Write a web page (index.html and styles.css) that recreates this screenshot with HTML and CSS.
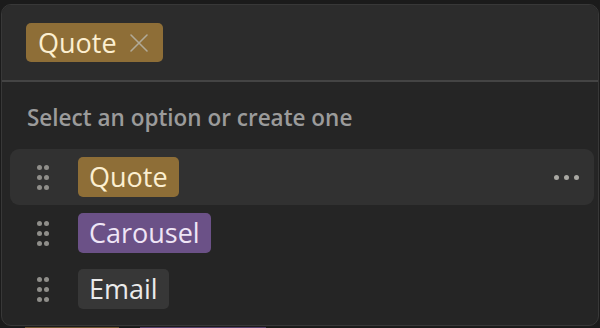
FILE: index.html
```html
<!DOCTYPE html>
<html>
<head>
<meta charset="utf-8">
<link rel="stylesheet" href="styles.css">
</head>
<body>
<div class="panel">
  <div class="header">
    <span class="tag tag-gold">Quote
      <svg class="remove" viewBox="0 0 20 20" width="20" height="20"><path d="M2 2 L18 18 M18 2 L2 18" stroke="currentColor" stroke-width="1.6" fill="none" stroke-linecap="round"/></svg>
    </span>
  </div>
  <div class="body">
    <div class="label">Select an option or create one</div>
    <div class="row hover">
      <span class="handle"><i></i><i></i><i></i><i></i><i></i><i></i></span>
      <span class="tag tag-gold">Quote</span>
      <span class="more"><i></i><i></i><i></i></span>
    </div>
    <div class="row">
      <span class="handle"><i></i><i></i><i></i><i></i><i></i><i></i></span>
      <span class="tag tag-purple">Carousel</span>
    </div>
    <div class="row">
      <span class="handle"><i></i><i></i><i></i><i></i><i></i><i></i></span>
      <span class="tag tag-gray">Email</span>
    </div>
  </div>
</div>
<div class="under">
  <span class="peek peek-gold"></span>
  <span class="peek peek-purple"></span>
</div>
</body>
</html>
```
FILE: styles.css
```css
html, body {
  margin: 0;
  padding: 0;
  background: #1b1b1b;
  font-family: "Open Sans", "Noto Sans", sans-serif;
  overflow: hidden;
}
.panel {
  margin: 4px 0 0 1px;
  width: 598px;
  height: 322px;
  box-sizing: border-box;
  border: 1px solid #383838;
  border-radius: 10px;
  overflow: hidden;
  background: #252525;
  display: flex;
  flex-direction: column;
}
.header {
  height: 77px;
  box-sizing: border-box;
  background: #2c2c2c;
  border-bottom: 2px solid #444444;
  padding: 0 0 0 24px;
  display: flex;
  align-items: center;
}
.tag {
  display: inline-flex;
  align-items: center;
  height: 40px;
  box-sizing: border-box;
  padding: 0 11px;
  border-radius: 5px;
  font-size: 27px;
  line-height: 40px;
  white-space: nowrap;
}
.header .tag {
  height: 39px;
  padding: 0 14px 0 12px;
}
.tag-gold { background: #8e6e37; color: #fcefd0; }
.tag-purple { background: #6b5187; color: #efe5f6; }
.tag-gray { background: #373737; color: #ebebeb; }
.remove {
  margin-left: 12px;
  color: #b1aa98;
}
.body {
  flex: 1;
  display: flex;
  flex-direction: column;
}
.label {
  height: 67px;
  box-sizing: border-box;
  padding: 21px 0 0 25px;
  font-size: 22.5px;
  font-weight: 600;
  color: #9b9b9b;
  line-height: 30px;
}
.row {
  height: 56px;
  margin: 0 4px 0 8px;
  border-radius: 9px;
  display: flex;
  align-items: center;
}
.row.hover { background: #313131; }
.handle {
  width: 12px;
  margin-left: 27px;
  margin-right: 29px;
  display: grid;
  grid-template-columns: 5px 5px;
  column-gap: 2px;
  row-gap: 5px;
}
.handle i, .more i {
  display: block;
  width: 5px;
  height: 5px;
  border-radius: 50%;
  background: #8f8e8a;
}
.more {
  margin-left: auto;
  margin-right: 15px;
  display: flex;
  gap: 5px;
}
.more i { background: #a9a8a3; }
.under {
  display: flex;
  height: 2px;
  margin-top: 1px;
}
.peek { display: block; height: 1px; }
.peek-gold { width: 94px; margin-left: 25px; background: #6e5530; }
.peek-purple { width: 126px; margin-left: 21px; background: #54416a; }
```
